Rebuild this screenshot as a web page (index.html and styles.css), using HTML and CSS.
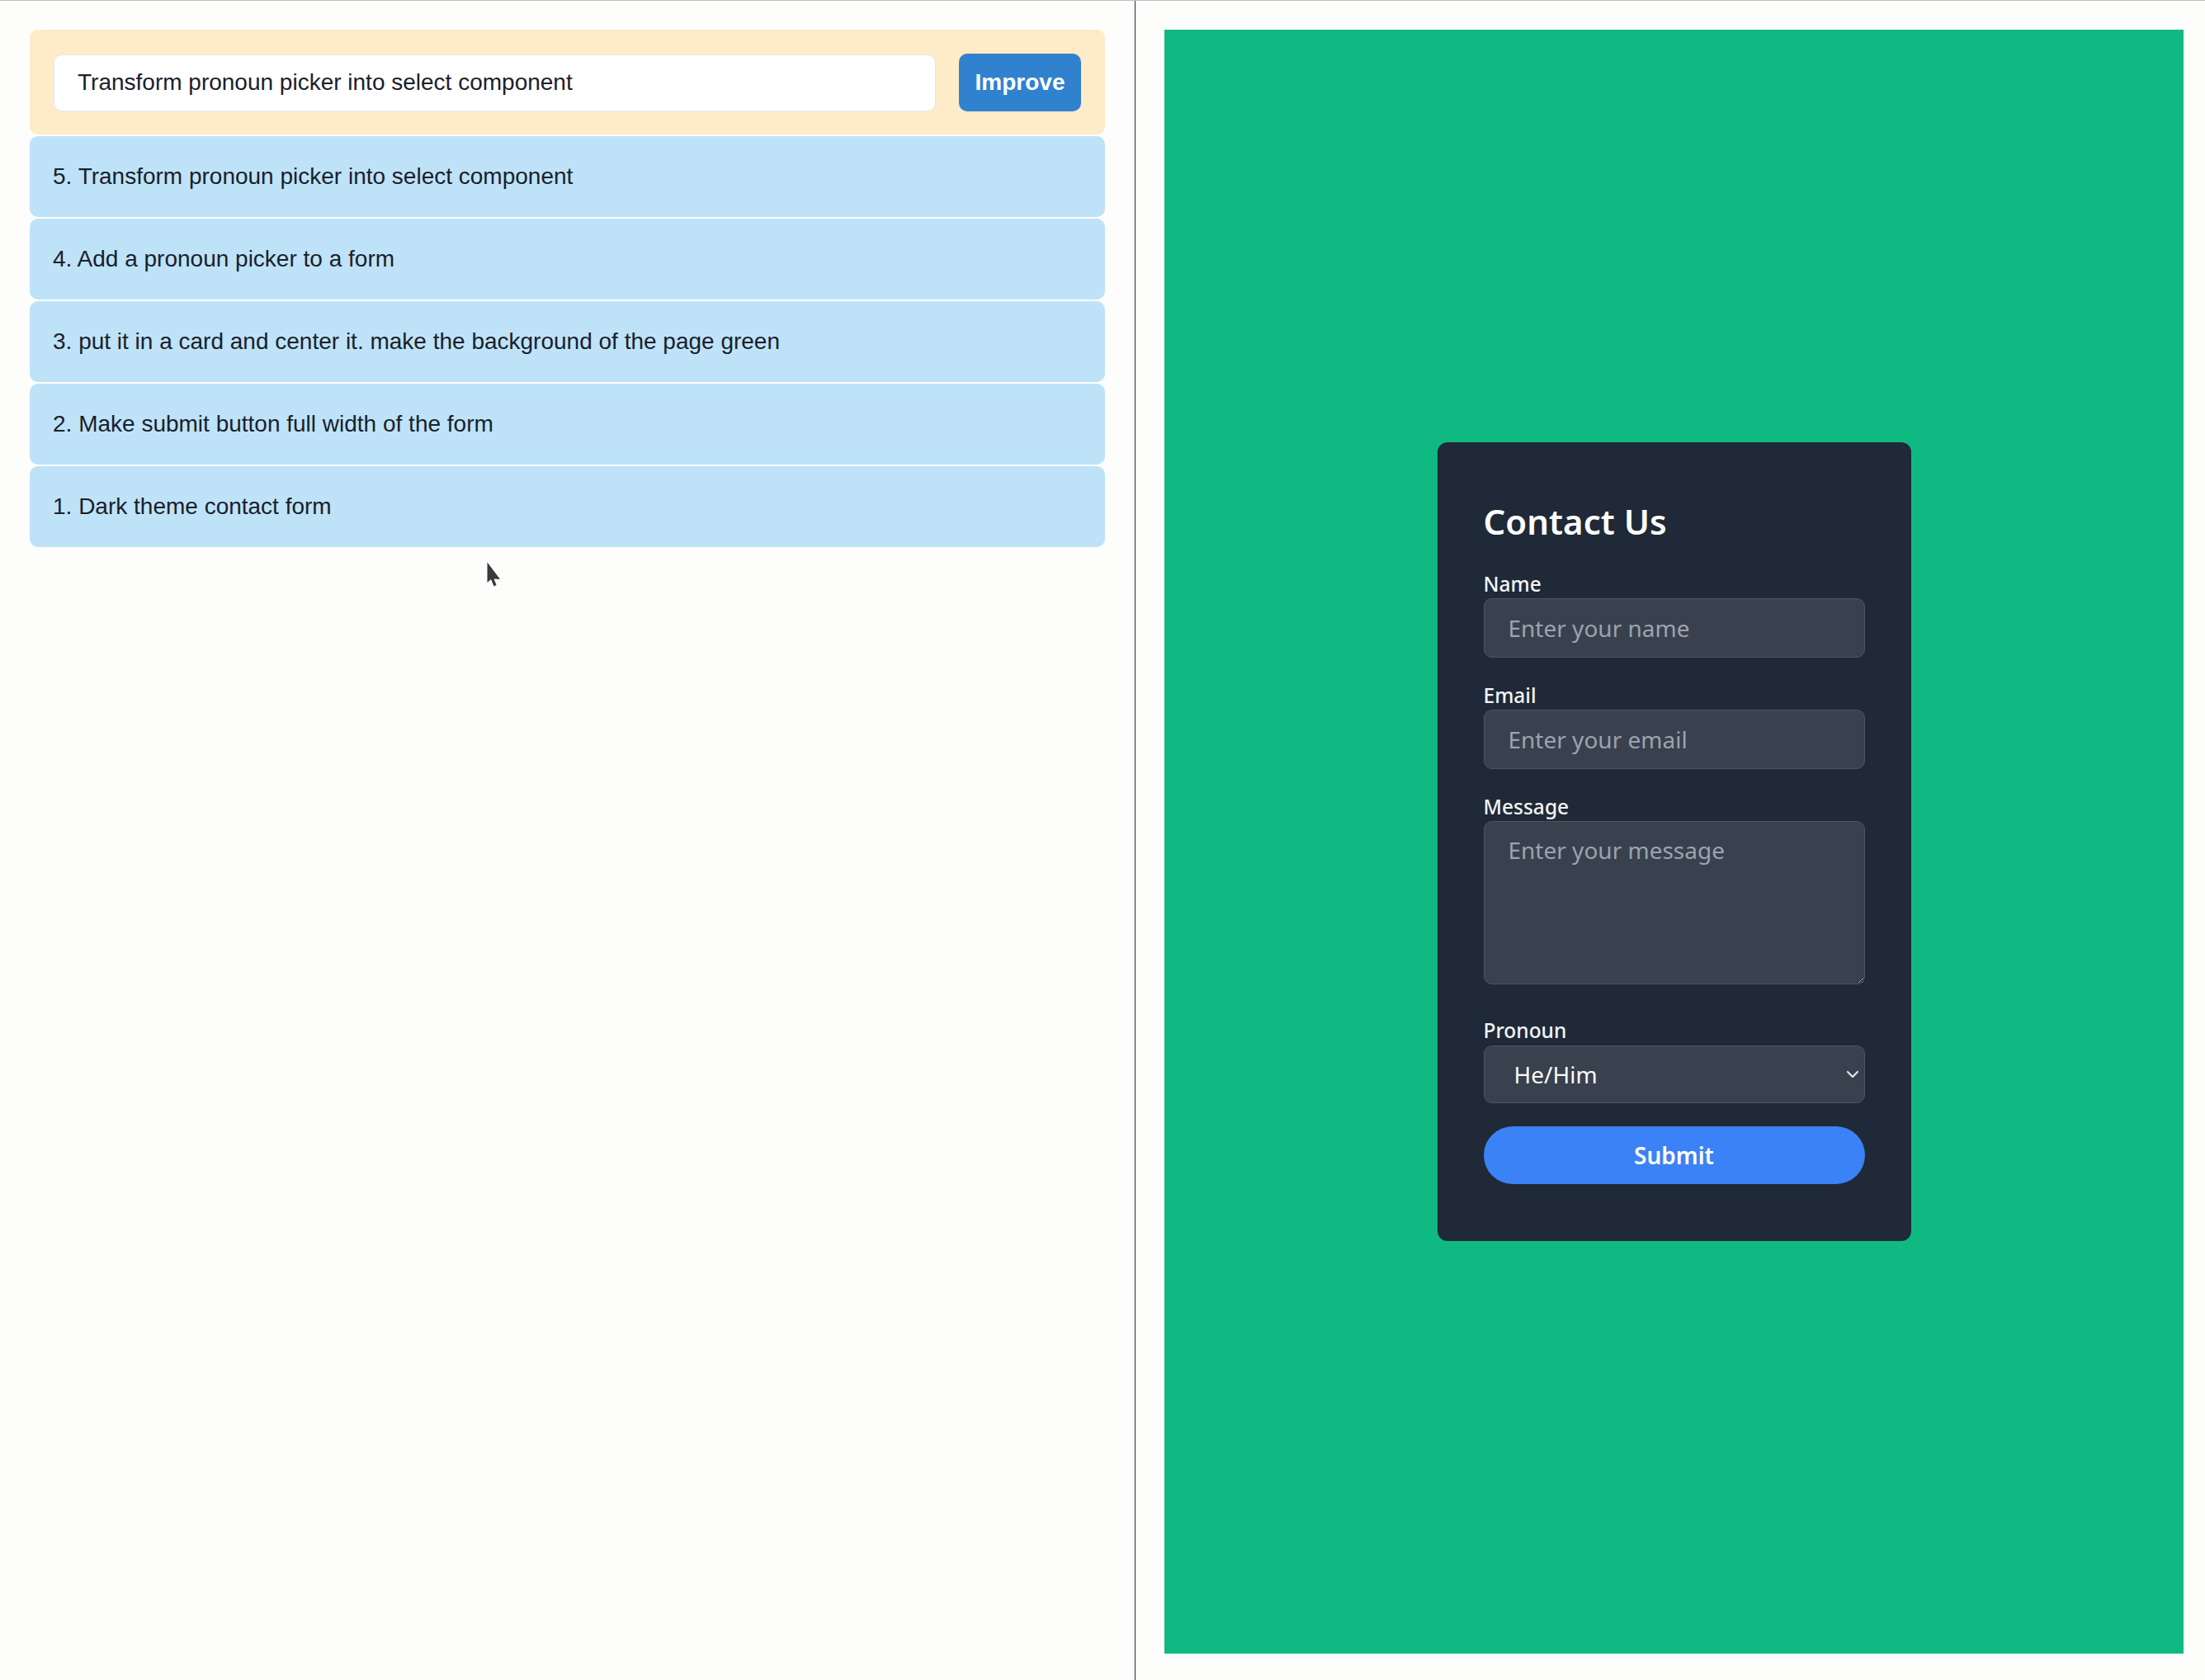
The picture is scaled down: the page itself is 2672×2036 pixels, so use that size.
FILE: index.html
```html
<!DOCTYPE html>
<html lang="en">
<head>
<meta charset="utf-8">
<title>Contact form builder</title>
<link rel="stylesheet" href="styles.css">
</head>
<body>
<div class="app">
  <aside class="history">
    <div class="prompt-bar">
      <input class="prompt-input" type="text" value="Transform pronoun picker into select component">
      <button class="improve-btn" type="button">Improve</button>
    </div>
    <ul class="steps">
      <li class="step">5. Transform pronoun picker into select component</li>
      <li class="step">4. Add a pronoun picker to a form</li>
      <li class="step">3. put it in a card and center it. make the background of the page green</li>
      <li class="step">2. Make submit button full width of the form</li>
      <li class="step">1. Dark theme contact form</li>
    </ul>
    <svg class="cursor" width="17" height="31" viewBox="0 0 17 31" aria-hidden="true">
      <path d="M0.5 0.5 L0.5 25 L5 21 L8.5 29.5 L11.5 28 L8.5 20.5 L16 21 Z" fill="#3a3a3a"/>
    </svg>
  </aside>
  <main class="preview">
    <div class="preview-frame">
      <form class="contact-card">
        <h2 class="card-title">Contact Us</h2>
        <div class="field">
          <label class="field-label" for="name">Name</label>
          <input class="field-input" id="name" type="text" placeholder="Enter your name">
        </div>
        <div class="field">
          <label class="field-label" for="email">Email</label>
          <input class="field-input" id="email" type="email" placeholder="Enter your email">
        </div>
        <div class="field field-message">
          <label class="field-label" for="message">Message</label>
          <textarea class="field-input field-textarea" id="message" placeholder="Enter your message"></textarea>
        </div>
        <div class="field">
          <label class="field-label" for="pronoun">Pronoun</label>
          <div class="select-wrap">
            <select class="field-input field-select" id="pronoun">
              <option>He/Him</option>
              <option>She/Her</option>
              <option>They/Them</option>
            </select>
            <svg class="chevron" width="16" height="10" viewBox="0 0 16 10" aria-hidden="true">
              <path d="M2 2 L8 8 L14 2" fill="none" stroke="#e5e7eb" stroke-width="2.2" stroke-linecap="round" stroke-linejoin="round"/>
            </svg>
          </div>
        </div>
        <button class="submit-btn" type="button">Submit</button>
      </form>
    </div>
  </main>
</div>
</body>
</html>
```
FILE: styles.css
```css
html, body {
  margin: 0;
  padding: 0;
}

body {
  background: #fdfdfb;
  border-top: 1px solid #bfbfbf;
  overflow: hidden;
}

.app {
  display: flex;
  height: 2035px;
}

/* ---------- left: prompt history ---------- */
.history {
  position: relative;
  flex: none;
  width: 1376px;
  box-sizing: border-box;
  padding: 35px 36px 0 36px;
  border-right: 1px solid #2a2e3a;
  font-family: "Liberation Sans", Arial, sans-serif;
  color: #1a202c;
}

.prompt-bar {
  display: flex;
  align-items: center;
  gap: 28px;
  padding: 29px 29px 28px 29px;
  background: #feebc8;
  border-radius: 10px;
}

.prompt-input {
  flex: 1;
  min-width: 0;
  height: 69px;
  box-sizing: border-box;
  padding: 0 28px;
  border: 1px solid #e2e8f0;
  border-radius: 10px;
  background: #ffffff;
  font-family: "Liberation Sans", Arial, sans-serif;
  font-size: 28px;
  color: #1a202c;
  outline: none;
}

.improve-btn {
  flex: none;
  width: 148px;
  height: 70px;
  border: none;
  border-radius: 10px;
  background: #3182ce;
  color: #ffffff;
  font-family: "Liberation Sans", Arial, sans-serif;
  font-size: 28px;
  font-weight: 700;
  padding: 0;
}

.steps {
  list-style: none;
  margin: 2px 0 0 0;
  padding: 0;
  display: flex;
  flex-direction: column;
  gap: 2px;
}

.step {
  height: 98px;
  display: flex;
  align-items: center;
  padding: 0 28px;
  background: #bee3f8;
  border-radius: 10px;
  font-size: 28px;
  color: #1a202c;
}

.cursor {
  position: absolute;
  left: 590px;
  top: 680px;
}

/* ---------- right: preview ---------- */
.preview {
  flex: 1;
  box-sizing: border-box;
  padding: 35px 26px 0 35px;
}

.preview-frame {
  height: 1968px;
  background: #10b981;
  display: flex;
  align-items: center;
  justify-content: center;
}

.contact-card {
  width: 574px;
  box-sizing: border-box;
  padding: 68px 56px 69px 56px;
  background: #1f2937;
  border-radius: 12px;
  font-family: "Noto Sans", "Open Sans", sans-serif;
}

.card-title {
  margin: 0 0 30px 0;
  font-size: 42px;
  line-height: 56px;
  font-weight: 600;
  color: #ffffff;
}

.field {
  margin-bottom: 28px;
}

.field-message {
  margin-bottom: 38px;
}

.field-label {
  display: block;
  font-size: 24.5px;
  line-height: 35px;
  font-weight: 500;
  color: #f3f4f6;
}

.field-input {
  display: block;
  width: 100%;
  height: 72px;
  box-sizing: border-box;
  margin: 0;
  padding: 0 29px;
  background: #39414e;
  border: 1px solid #4b5563;
  border-radius: 10px;
  font-family: "Noto Sans", "Open Sans", sans-serif;
  font-size: 28px;
  color: #ffffff;
  outline: none;
}

.field-input::placeholder {
  color: #9ca3af;
}

.field-textarea {
  height: 198px;
  padding: 15px 29px;
  resize: vertical;
  line-height: normal;
}

.select-wrap {
  position: relative;
  margin-top: 1px;
}

.field-select {
  height: 70px;
  padding: 0 40px 0 36px;
  appearance: none;
  -webkit-appearance: none;
  color: #f9fafb;
}

.chevron {
  position: absolute;
  right: 7px;
  top: 30px;
  pointer-events: none;
}

.submit-btn {
  display: block;
  width: 100%;
  height: 70px;
  border: none;
  border-radius: 9999px;
  background: #3b82f6;
  color: #ffffff;
  font-family: "Noto Sans", "Open Sans", sans-serif;
  font-size: 28px;
  font-weight: 600;
  padding: 0;
}
```
